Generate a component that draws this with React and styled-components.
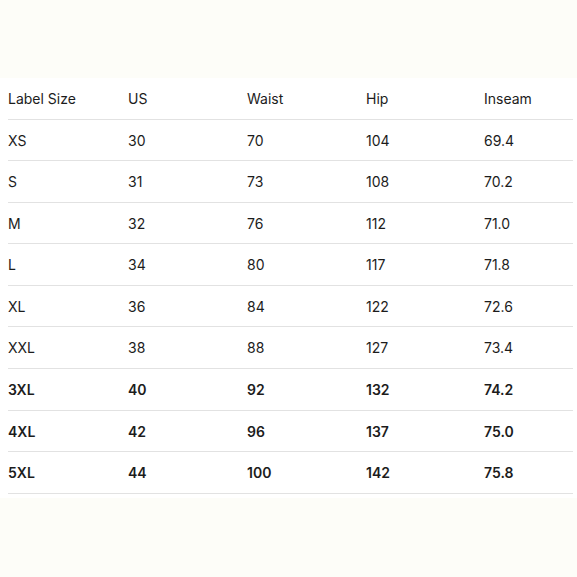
import React from "react";
import styled, { createGlobalStyle } from "styled-components";

const GlobalStyle = createGlobalStyle`
  html, body {
    margin: 0;
    background: #fdfdf8;
  }
  body {
    font-family: Inter, "Noto Sans", sans-serif;
    color: #1c1c1c;
  }
`;

const Section = styled.section`
  margin-top: 78px;
  background: #ffffff;
  padding: 0 4px 4px 8px;
`;

const Table = styled.div`
  display: grid;
  grid-template-columns: 120px 119px 119px 118px 1fr;
`;

const Cell = styled.div`
  padding: 13px 0 11px;
  line-height: 16.56px;
  font-size: 14px;
  font-weight: ${(p) => (p.$bold ? 600 : 400)};
  border-bottom: 1px solid #e2e2e2;
  white-space: nowrap;
`;

const headers = ["Label Size", "US", "Waist", "Hip", "Inseam"];

const rows = [
  ["XS", "30", "70", "104", "69.4"],
  ["S", "31", "73", "108", "70.2"],
  ["M", "32", "76", "112", "71.0"],
  ["L", "34", "80", "117", "71.8"],
  ["XL", "36", "84", "122", "72.6"],
  ["XXL", "38", "88", "127", "73.4"],
  ["3XL", "40", "92", "132", "74.2", true],
  ["4XL", "42", "96", "137", "75.0", true],
  ["5XL", "44", "100", "142", "75.8", true],
];

const App = () => {
  return (
    <>
      <GlobalStyle />
      <Section>
        <Table>
          {headers.map((h) => (
            <Cell key={h}>{h}</Cell>
          ))}
          {rows.map((row) =>
            row.slice(0, 5).map((value, i) => (
              <Cell key={row[0] + i} $bold={row[5]}>
                {value}
              </Cell>
            ))
          )}
        </Table>
      </Section>
    </>
  );
};

export default App;
